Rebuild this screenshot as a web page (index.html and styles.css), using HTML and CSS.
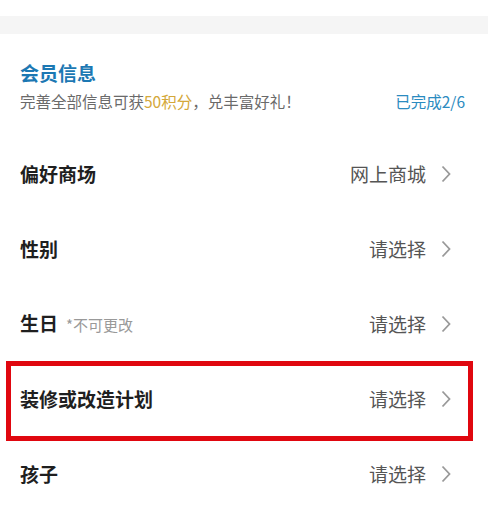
FILE: index.html
```html
<!DOCTYPE html>
<html lang="zh-CN">

<head>
    <meta charset="UTF-8">
    <meta name="viewport" content="width=device-width, initial-scale=1.0">
    <title>会员信息</title>
    <link rel="stylesheet" href="styles.css">
</head>

<body>
    <div class="top-space"></div>
    <div class="gap-band"></div>

    <div class="info-head">
        <h2 class="info-title">会员信息</h2>
        <div class="info-sub">
            <span>完善全部信息可获<em class="points">50积分</em>，兑丰富好礼！</span>
            <span class="progress">已完成2/6</span>
        </div>
    </div>

    <ul class="field-list">
        <li class="field">
            <span class="field-label">偏好商场</span>
            <span class="field-value">网上商城</span>
            <svg class="arrow" viewBox="0 0 10 18"><path d="M1.5 1.5 L8.5 9 L1.5 16.5"/></svg>
        </li>
        <li class="field">
            <span class="field-label">性别</span>
            <span class="field-value">请选择</span>
            <svg class="arrow" viewBox="0 0 10 18"><path d="M1.5 1.5 L8.5 9 L1.5 16.5"/></svg>
        </li>
        <li class="field">
            <span class="field-label">生日<small class="field-note">*不可更改</small></span>
            <span class="field-value">请选择</span>
            <svg class="arrow" viewBox="0 0 10 18"><path d="M1.5 1.5 L8.5 9 L1.5 16.5"/></svg>
        </li>
        <li class="field marked">
            <span class="field-label">装修或改造计划</span>
            <span class="field-value">请选择</span>
            <svg class="arrow" viewBox="0 0 10 18"><path d="M1.5 1.5 L8.5 9 L1.5 16.5"/></svg>
        </li>
        <li class="field">
            <span class="field-label">孩子</span>
            <span class="field-value">请选择</span>
            <svg class="arrow" viewBox="0 0 10 18"><path d="M1.5 1.5 L8.5 9 L1.5 16.5"/></svg>
        </li>
    </ul>
</body>

</html>
```

FILE: styles.css
```css
:root {
    --blue: #1c78b3;
    --blue-light: #2b8bc0;
    --gold: #d4a83a;
    --text: #1f1f1f;
    --sub: #6a6a6a;
    --value: #555;
    --mark: #e0070f;
}

body {
    margin: 0;
    background: #fff;
    font-family: "Noto Sans CJK SC", "Noto Sans", sans-serif;
    color: var(--text);
}

.top-space {
    height: 16px;
}

.gap-band {
    height: 18px;
    background: #f5f5f5;
}

.info-head {
    padding: 26px 23px 24px 20px;
}

.info-title {
    margin: 0;
    font-size: 19px;
    line-height: 25px;
    font-weight: bold;
    color: var(--blue);
}

.info-sub {
    display: flex;
    justify-content: space-between;
    margin-top: 6px;
    font-size: 15.5px;
    line-height: 21px;
    color: var(--sub);
}

.points {
    font-style: normal;
    color: var(--gold);
}

.progress {
    color: var(--blue-light);
}

.field-list {
    list-style: none;
    margin: 0;
    padding: 0;
}

.field {
    position: relative;
    display: flex;
    align-items: center;
    height: 75px;
    padding: 0 37px 0 20px;
}

.field-label {
    flex: 1;
    font-size: 19px;
    font-weight: bold;
    line-height: 24px;
}

.field-note {
    margin-left: 8px;
    font-size: 15px;
    font-weight: normal;
    color: #999;
}

.field-value {
    font-size: 19px;
    color: var(--value);
    line-height: 24px;
}

.arrow {
    width: 10px;
    height: 18px;
    margin-left: 15px;
    fill: none;
    stroke: #999;
    stroke-width: 1.8;
}

.marked::after {
    content: "";
    position: absolute;
    left: 6px;
    right: 15px;
    top: 0;
    bottom: -5px;
    border: 5px solid var(--mark);
}
```
